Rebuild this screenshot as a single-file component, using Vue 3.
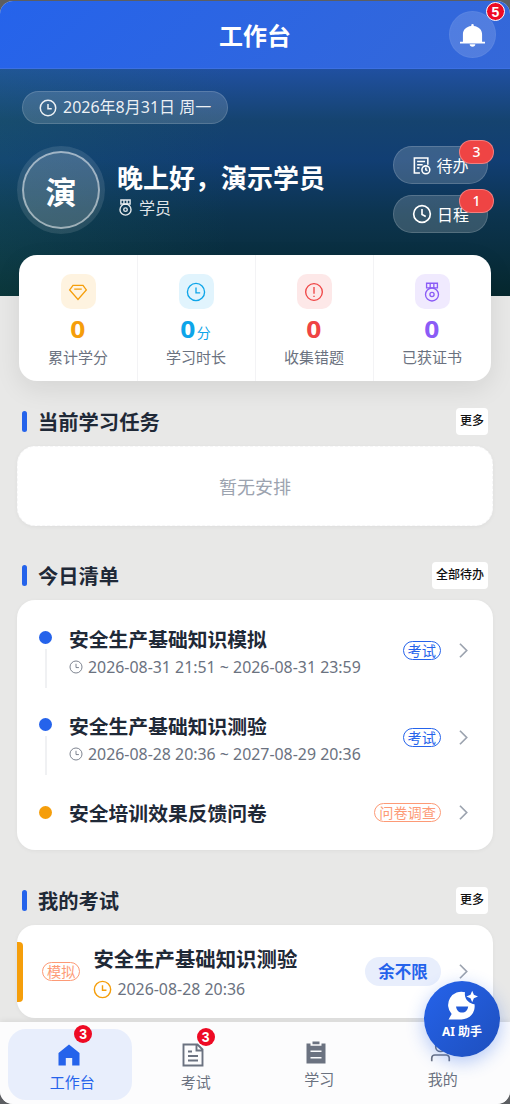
<script setup>
import { h } from 'vue'

const shapes = {
  clock: '<circle cx="12" cy="12" r="10.300"/><path d="M12 6.500V13h5"/>',
  clockHand: '<circle cx="12" cy="12" r="10"/><path d="M12 6v6.500l4.500 2.500"/>',
  medal: '<path d="M5.500 1.500h13v5.500h-13zM9.800 2v5M14.200 2v5"/><circle cx="12" cy="15" r="7.800"/><circle cx="12" cy="15" r="2.500"/>',
  diamond: '<path d="M6 4h12l4 5.500L12 21 2 9.500zM7.500 8.500h9"/>',
  alert: '<circle cx="12" cy="12" r="10"/><path d="M12 6v8M12 16.500v1.500"/>',
  todo: '<path d="M10 21.500H3v-19h17V11M6.500 7h10M6.500 11h7M6.500 15h3"/><circle cx="17.500" cy="17.500" r="5"/><path d="M17.500 14.500v3l2 1"/>',
  chevron: '<path d="M7 2.500l9.500 9.500L7 21.500"/>',
  bell: '<g fill="currentColor" stroke="none"><path d="M12 1a1.200 1.200 0 0 0-1.200 1.200v.7C6 3.500 2.800 6.500 2.800 11v7.500h18.400V11c0-4.500-3.200-7.500-8-8.100v-.7A1.200 1.200 0 0 0 12 1z"/><path d="M0 18h24v1.600H0zM9.300 20.400h5.400a2.700 2.300 0 0 1-5.400 0z"/></g>',
  home: '<path fill="currentColor" stroke="none" d="M12 1.500L1.500 10v12.500h7.300V15h6.400v7.500h7.300V10z"/>',
  exam: '<path d="M2.500 1.500h14l5 5v16h-19zM15.500 2v5.500h5.500M7 8.500h4M7 13h10M7 17.500h10"/>',
  study: '<path fill="currentColor" stroke="none" fill-rule="evenodd" d="M8.500 1.500h7v2.700h-7zM2.500 3.500H6.500v2.300h11V3.500h4v20h-19zM6.500 10.500v1.500h11v-1.500zM6.500 17v1.500h11v-1.500z"/>',
  user: '<circle cx="12" cy="6.500" r="5.500"/><path d="M2 23v-3.500a3.500 3.500 0 0 1 3.500-3.500h13a3.500 3.500 0 0 1 3.500 3.500V23"/>',
  bot: '<path fill="currentColor" stroke="none" fill-rule="evenodd" d="M14 1.700A10.300 10.300 0 0 0 3.600 18.600L1.200 22.800H11A10.200 10.200 0 0 0 21.300 11C17.500 11 12.800 7 14 1.700zM7 12.800h9.400c-.3 3-2.200 4.700-4.700 4.700S7.300 15.800 7 12.800z"/><path fill="currentColor" stroke="none" d="M19.500.5l1.300 3.200L24 5l-3.200 1.300-1.300 3.200-1.300-3.200L15 5l3.200-1.300z"/>'
}

const Icon = (props) =>
  h('svg', {
    viewBox: '0 0 24 24',
    fill: 'none',
    stroke: 'currentColor',
    'stroke-width': props.weight || 1.8,
    overflow: 'visible',
    innerHTML: shapes[props.name]
  })
Icon.props = ['name', 'weight']

const stats = [
  { icon: 'diamond', value: '0', unit: '', label: '累计学分', tone: 'amber' },
  { icon: 'clock', value: '0', unit: '分', label: '学习时长', tone: 'sky' },
  { icon: 'alert', value: '0', unit: '', label: '收集错题', tone: 'red' },
  { icon: 'medal', value: '0', unit: '', label: '已获证书', tone: 'violet' }
]

const todos = [
  { title: '安全生产基础知识模拟', time: '2026-08-31 21:51 ~ 2026-08-31 23:59', tag: '考试', tone: 'blue' },
  { title: '安全生产基础知识测验', time: '2026-08-28 20:36 ~ 2027-08-29 20:36', tag: '考试', tone: 'blue' },
  { title: '安全培训效果反馈问卷', time: '', tag: '问卷调查', tone: 'orange' }
]

const tabs = [
  { icon: 'home', label: '工作台', badge: 3, active: true },
  { icon: 'exam', label: '考试', badge: 3 },
  { icon: 'study', label: '学习' },
  { icon: 'user', label: '我的' }
]
</script>

<template>
  <div class="phone">
    <header class="topbar">
      <h1>工作台</h1>
      <button class="bell"><Icon name="bell" class="bell-icon" /><span class="dot-badge">5</span></button>
    </header>

    <main class="content">
      <section class="hero">
        <div class="date"><Icon name="clock" weight="2" class="i18" /><span>2026年8月31日 周一</span></div>
        <div class="profile">
          <div class="avatar">演</div>
          <div class="who">
            <div class="hello">晚上好，演示学员</div>
            <div class="role"><Icon name="medal" weight="2" class="i17" /><span>学员</span></div>
          </div>
          <div class="actions">
            <div class="action"><Icon name="todo" weight="2" class="i19" /><span>待办</span><b>3</b></div>
            <div class="action"><Icon name="clockHand" weight="2" class="i20" /><span>日程</span><b>1</b></div>
          </div>
        </div>
      </section>

      <section class="stats">
        <div v-for="s in stats" :key="s.label" class="stat" :class="s.tone">
          <div class="stat-icon"><Icon :name="s.icon" weight="1.600" class="i20" /></div>
          <div class="value"><span>{{ s.value }}</span><small v-if="s.unit">{{ s.unit }}</small></div>
          <div class="label">{{ s.label }}</div>
        </div>
      </section>

      <div class="section-head first"><h2>当前学习任务</h2><button>更多</button></div>
      <section class="card empty">暂无安排</section>

      <div class="section-head second"><h2>今日清单</h2><button>全部待办</button></div>
      <section class="card list">
        <div v-for="t in todos" :key="t.title" class="todo" :class="{ short: !t.time }">
          <div class="rail" :class="t.tone"><i></i><s v-if="t.time"></s></div>
          <div class="info">
            <div class="title">{{ t.title }}</div>
            <div v-if="t.time" class="time"><Icon name="clock" weight="1.500" class="i14" /><span>{{ t.time }}</span></div>
          </div>
          <span class="tag" :class="t.tone">{{ t.tag }}</span>
          <Icon name="chevron" weight="2.400" class="chev" />
        </div>
      </section>

      <div class="section-head third"><h2>我的考试</h2><button>更多</button></div>
      <section class="card exam-card">
        <span class="tag orange">模拟</span>
        <div class="info">
          <div class="title">安全生产基础知识测验</div>
          <div class="time"><Icon name="clock" class="i19" /><span>2026-08-28 20:36</span></div>
        </div>
        <span class="left">余不限</span>
        <Icon name="chevron" weight="2.400" class="chev" />
      </section>
    </main>

    <nav class="tabbar">
      <div v-for="t in tabs" :key="t.label" class="tab" :class="['tab-' + t.icon, { active: t.active }]">
        <div class="tab-pic"><Icon :name="t.icon" weight="1.900" /><span v-if="t.badge" class="dot-badge">{{ t.badge }}</span></div>
        <span>{{ t.label }}</span>
      </div>
    </nav>

    <button class="assistant"><Icon name="bot" /><span>AI 助手</span></button>
  </div>
</template>

<style>
body { background: #5c5e62; }
</style>

<style scoped>
* { box-sizing: border-box; }
.phone {
  position: relative; display: flex; flex-direction: column;
  height: 1103px; margin-top: 1px; border-radius: 13px; overflow: hidden;
  background: #e8e8e7; color: #1f2937;
  font-family: "Noto Sans", "Noto Sans CJK SC", sans-serif;
}
button { border: 0; padding: 0; font: inherit; color: inherit; }
h1, h2 { margin: 0; }
svg { display: block; flex: none; }
.i14 { width: 14px; height: 14px; }
.i17 { width: 17px; height: 17px; }
.i18 { width: 18px; height: 18px; }
.i19 { width: 19px; height: 19px; }
.i20 { width: 20px; height: 20px; }

.topbar {
  flex: none; position: relative; height: 68px; padding-right: 14px;
  display: flex; align-items: center; justify-content: flex-end;
  background: linear-gradient(135deg, #2563eb, #3568d8); border-bottom: 1px solid #3c70e3; color: #fff;
}
h1 { position: absolute; left: 0; right: 0; top: 17px; text-align: center; font-size: 24px; line-height: 36px; }
.bell {
  position: relative; display: grid; place-items: center; width: 47px; height: 47px;
  border-radius: 50%; border: 1px solid #ffffff0c; background: #ffffff26; color: #fff;
}
.bell-icon { width: 25px; height: 25px; margin-top: 2px; }
.dot-badge {
  position: absolute; display: grid; place-items: center; width: 18px; height: 18px; border-radius: 50%;
  background: #ee0a24; color: #fff; font: bold 14px/18px "Liberation Sans", sans-serif;
}
.bell .dot-badge { right: -10px; top: -10px; width: 19px; height: 19px; border: 1px solid #fff; }

.content { flex: 1; min-height: 0; overflow: hidden; }
.hero {
  height: 227px; padding: 22px 22px 0 17px; color: #fff;
  background:
    linear-gradient(90deg, #1f6d6a38, transparent 45%),
    linear-gradient(180deg, #2050a1 0%, #15436f 23%, #113e73 40%, #0c344f 64%, #06282e 100%);
}
.date {
  display: flex; align-items: center; gap: 6px; width: 206px; height: 33px; margin-left: 5px; padding-left: 16px;
  border-radius: 17px; background: #ffffff26; border: 1px solid #ffffff26; font-size: 16px; color: #ffffffe8;
  line-height: 30px; white-space: nowrap;
}
.date span { margin-top: -1px; }
.profile { display: flex; align-items: center; margin-top: 22px; }
.avatar {
  display: grid; place-items: center; width: 78px; height: 78px; margin: 0 5px;
  border-radius: 50%; border: 2px solid #ffffff80; background: #ffffff33; box-shadow: 0 0 0 5px #ffffff1c;
  font-size: 31px; font-weight: 700; line-height: 1; padding-top: 5px;
}
.who { flex: 1; margin-left: 12px; }
.hello { font-size: 26px; line-height: 36px; font-weight: 700; white-space: nowrap; }
.role { display: flex; align-items: center; gap: 5px; font-size: 16px; line-height: 24px; color: #ffffffe0; }
.actions { display: flex; flex-direction: column; gap: 11px; }
.action {
  position: relative; display: flex; align-items: center; justify-content: center; gap: 5px; width: 95px; height: 38px;
  border-radius: 19px; background: #ffffff2c; border: 1px solid #ffffff28; font-size: 16px;
}
.action b {
  position: absolute; right: -7px; top: -7px; width: 35px; height: 24px; border-radius: 12px;
  background: #ef4444; border: 1px solid #ffffff50; font-size: 14px; line-height: 22px; text-align: center; font-weight: 500;
}

.stats {
  position: relative; display: grid; grid-template-columns: repeat(4, 1fr); height: 126px; margin: -41px 19px 0;
  border-radius: 18px; background: #fff; box-shadow: 0 8px 26px #00000016;
}
.stat { display: flex; flex-direction: column; align-items: center; padding-top: 19px; box-shadow: 1px 0 #f3f3f5; }
.stat:last-child { box-shadow: none; }
.stat-icon { display: grid; place-items: center; width: 35px; height: 35px; border-radius: 10px; }
.value { display: flex; align-items: baseline; gap: 1px; height: 26px; margin-top: 7px; font-size: 24px; line-height: 26px; font-weight: 700; }
.value span { transform: scaleX(1.1); }
.value small { margin-left: 1px; font-size: 14px; font-weight: 400; }
.label { margin-top: 4px; font-size: 15px; line-height: 22px; color: #6b7280; }
.amber { color: #f59e0b; } .amber .stat-icon { background: #fef3e0; }
.sky { color: #0ea5e9; } .sky .stat-icon { background: #e1f4fd; }
.red { color: #ef4444; } .red .stat-icon { background: #fde8e8; }
.violet { color: #8b5cf6; } .violet .stat-icon { background: #f0eafe; }

.section-head { display: flex; align-items: center; justify-content: space-between; height: 28px; padding: 0 22px; }
.first { margin-top: 26px; }
.second { margin-top: 35px; }
.third { margin-top: 36px; }
h2 { display: flex; align-items: center; gap: 11px; font-size: 20.300px; line-height: 28px; padding-top: 2px; }
h2::before { content: ""; width: 5px; height: 21px; margin-top: -2px; border-radius: 3px; background: #2563eb; }
.section-head button {
  height: 27px; padding: 0 4px; border-radius: 4px; background: #fff; font-size: 12px; line-height: 26px; font-weight: 500; color: #111;
}
.card { margin: 11px 17px 0; border-radius: 18px; background: #fff; box-shadow: 0 1px 4px #0000000c; }
.empty { height: 80px; padding-top: 27px; text-align: center; font-size: 18px; line-height: 27px; color: #9ca3af; border: 1px dashed #f6f6f7; }
.list { height: 250px; padding: 7px 21px 0 22px; }
.todo { display: flex; align-items: center; height: 87px; }
.todo.short { height: 62px; }
.rail { display: flex; flex-direction: column; align-items: center; width: 13px; height: 65px; margin: 12px 17px 0 0; padding-top: 7px; }
.rail i { flex: none; width: 13px; height: 13px; border-radius: 50%; background: #2563eb; }
.rail.orange i { background: #f59e0b; }
.rail s { width: 2px; height: 39px; margin-top: 5px; background: #f0f1f3; }
.short .rail { height: 13px; margin-top: 0; padding-top: 0; }
.info { flex: 1; min-width: 0; padding-top: 5px; white-space: nowrap; }
.short .info { padding-top: 3px; }
.title { font-size: 19.800px; line-height: 28px; font-weight: 700; }
.time { display: flex; align-items: center; gap: 5px; font-size: 15.900px; line-height: 26px; color: #6b7280; }
.tag {
  height: 19px; padding: 0 4px; border: 1px solid currentColor; border-radius: 10px; font-size: 14.200px; line-height: 18px; white-space: nowrap;
}
.tag.blue { color: #2563eb; }
.tag.orange { color: #fd9a76; }
.chev { width: 17px; height: 17px; margin-left: 14px; color: #9ca3af; }
.exam-card { position: relative; display: flex; align-items: center; height: 93px; padding: 0 21px 0 25px; }
.exam-card::before { content: ""; position: absolute; left: 0; top: 17px; width: 6px; height: 60px; border-radius: 0 4px 4px 0; background: #f59e0b; }
.exam-card .info { margin-left: 13px; padding-top: 4px; }
.exam-card .title { font-size: 20.400px; }
.exam-card .time { margin-top: 3px; }
.exam-card .time svg { color: #f59e0b; }
.left { width: 76px; height: 29px; border-radius: 15px; background: #e8eefc; color: #2563eb; font-size: 16.500px; line-height: 29px; font-weight: 700; text-align: center; }

.tabbar { flex: none; display: flex; height: 82px; padding: 7px 8px 4px; background: #fcfcfd; box-shadow: 0 -2px 5px #0000000e; }
.tab { flex: 1; display: flex; flex-direction: column; align-items: center; padding: 14px 0 0 5px; border-radius: 18px; font-size: 15px; line-height: 22px; color: #6b7280; }
.tab.active { background: #e8eefc; color: #2563eb; }
.tab-pic { position: relative; width: 24px; height: 24px; margin-bottom: 4px; }
.tab .dot-badge { left: 17px; top: -18px; }
.tab-home .tab-pic, .tab-exam .tab-pic, .tab-study .tab-pic { left: -3px; }
.tab-exam .dot-badge { left: 16px; top: -15px; }
.tab-study { padding-top: 11px; }
.tab-user { padding-top: 12px; }
.tab-user .tab-pic { width: 21px; height: 21px; left: -2px; margin-bottom: 6px; }

.assistant {
  position: absolute; right: 10px; bottom: 47px; display: flex; flex-direction: column; align-items: center;
  width: 76px; height: 76px; padding-top: 9px; border-radius: 50%; color: #fff;
  background: linear-gradient(135deg, #2563eb, #1e4fbd); box-shadow: 0 5px 18px #2563eb55;
  font-size: 12px; line-height: 18px; font-weight: 700;
}
.assistant svg { width: 31px; height: 31px; margin-bottom: 2px; }
</style>
